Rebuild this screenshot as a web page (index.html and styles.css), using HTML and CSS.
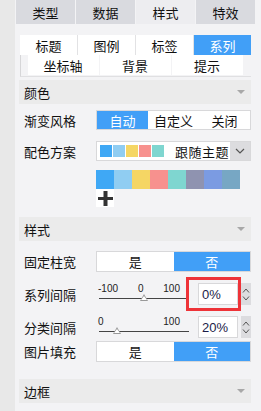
FILE: index.html
```html
<!DOCTYPE html>
<html lang="zh">
<head>
<meta charset="utf-8">
<link rel="stylesheet" href="styles.css">
</head>
<body>
<div class="strip"></div>
<div class="main">
  <div class="top-tabs">
    <div class="top-tab">类型</div>
    <div class="top-tab">数据</div>
    <div class="top-tab active">样式</div>
    <div class="top-tab">特效</div>
  </div>

  <div class="sub-tabs">
    <div class="sub-row1">
      <div class="sub-tab">标题</div>
      <div class="sub-tab">图例</div>
      <div class="sub-tab">标签</div>
      <div class="sub-tab active">系列</div>
    </div>
    <div class="sub-row2">
      <div class="sub-tab2">坐标轴</div>
      <div class="sub-tab2">背景</div>
      <div class="sub-tab2">提示</div>
    </div>
  </div>

  <div class="section-head first"><span>颜色</span><i class="tri"></i></div>

  <div class="row r-grad">
    <div class="label">渐变风格</div>
    <div class="btn-group">
      <div class="btn active">自动</div>
      <div class="btn">自定义</div>
      <div class="btn">关闭</div>
    </div>
  </div>

  <div class="row r-scheme">
    <div class="label">配色方案</div>
    <div class="select">
      <div class="select-body">
        <span class="sw" style="background:#3fa8f5"></span>
        <span class="sw" style="background:#90cdf2"></span>
        <span class="sw" style="background:#f5d664"></span>
        <span class="sw" style="background:#f7918e"></span>
        <span class="sw" style="background:#7fd6d0"></span>
        <span class="select-text">跟随主题</span>
      </div>
      <div class="select-arrow">
        <svg width="10" height="6" viewBox="0 0 10 6"><polyline points="1,1 5,5 9,1" fill="none" stroke="#555" stroke-width="1.2"/></svg>
      </div>
    </div>
  </div>

  <div class="palette-wrap">
    <div class="palette">
      <span style="background:#3fa8f5"></span>
      <span style="background:#90cdf2"></span>
      <span style="background:#f5d664"></span>
      <span style="background:#f7918e"></span>
      <span style="background:#7fd6d0"></span>
      <span style="background:#8f93b0"></span>
      <span style="background:#7b9be2"></span>
      <span style="background:#77a7c4"></span>
    </div>
    <div class="plus">
      <svg width="18" height="18" viewBox="0 0 18 18"><rect x="7.5" y="2" width="4" height="15" fill="#333"/><rect x="2" y="8" width="15" height="3" fill="#333"/></svg>
    </div>
  </div>

  <div class="section-head s-style"><span>样式</span><i class="tri"></i></div>

  <div class="row r-fixed">
    <div class="label">固定柱宽</div>
    <div class="toggle">
      <div class="tg">是</div>
      <div class="tg active">否</div>
    </div>
  </div>

  <div class="row r-slider1">
    <div class="label">系列间隔</div>
    <div class="slider-ctl">
      <div class="slider">
        <div class="ticks">
          <span>-100</span><span>0</span><span>100</span>
        </div>
        <div class="track"><i class="thumb" style="left:45px"></i></div>
      </div>
      <div class="num">
        <div class="input">0%</div>
        <div class="highlight"></div>
      </div>
      <div class="spin">
        <svg width="8" height="5" viewBox="0 0 8 5"><polyline points="1,4.5 4,1 7,4.5" fill="none" stroke="#555" stroke-width="1"/></svg>
        <svg width="8" height="5" viewBox="0 0 8 5"><polyline points="1,0.5 4,4 7,0.5" fill="none" stroke="#555" stroke-width="1"/></svg>
      </div>
    </div>
  </div>

  <div class="row r-slider2">
    <div class="label">分类间隔</div>
    <div class="slider-ctl">
      <div class="slider">
        <div class="ticks">
          <span>0</span><span>100</span>
        </div>
        <div class="track"><i class="thumb" style="left:18px"></i></div>
      </div>
      <div class="num">
        <div class="input">20%</div>
      </div>
      <div class="spin">
        <svg width="8" height="5" viewBox="0 0 8 5"><polyline points="1,4.5 4,1 7,4.5" fill="none" stroke="#555" stroke-width="1"/></svg>
        <svg width="8" height="5" viewBox="0 0 8 5"><polyline points="1,0.5 4,4 7,0.5" fill="none" stroke="#555" stroke-width="1"/></svg>
      </div>
    </div>
  </div>

  <div class="row r-fill">
    <div class="label">图片填充</div>
    <div class="toggle">
      <div class="tg">是</div>
      <div class="tg active">否</div>
    </div>
  </div>

  <div class="section-head s-border"><span>边框</span><i class="tri"></i></div>
</div>
</body>
</html>
```
FILE: styles.css
```css
* { box-sizing: border-box; }
html, body { margin: 0; padding: 0; }
body {
  width: 261px;
  height: 411px;
  overflow: hidden;
  display: flex;
  background: #f3f3f5;
  font-family: "Noto Sans CJK SC", "Noto Sans", sans-serif;
  font-size: 12px;
  color: #111;
}
.strip {
  width: 15px;
  flex: 0 0 15px;
  background: #e8e8e8;
}
.main {
  flex: 1;
  display: flex;
  flex-direction: column;
}

/* top tabs */
.top-tabs {
  display: flex;
  gap: 1px;
  height: 24px;
  margin: 0 6px 0 1px;
}
.top-tab {
  flex: 1;
  display: flex;
  align-items: center;
  justify-content: center;
  background: #d9dadf;
  font-size: 13px;
  line-height: 1;
}
.top-tab.active { background: #ededf0; }

/* sub tabs */
.sub-tabs {
  margin: 11px 10px 0 5px;
}
.sub-row1 {
  display: flex;
  gap: 1px;
  height: 20px;
  background: #e2e2e4;
}
.sub-tab {
  flex: 1;
  background: #fff;
  display: flex;
  align-items: center;
  justify-content: center;
  font-size: 13px;
  line-height: 1;
}
.sub-tab.active { background: #419ff7; color: #fff; }
.sub-row2 {
  display: flex;
  justify-content: center;
  gap: 1px;
  height: 22px;
  border-left: 1px solid #d6d6d8;
  border-bottom: 1px solid #e0e0e2;
  padding-right: 2px;
}
.sub-tab2 {
  width: 71px;
  height: 20px;
  background: #fff;
  display: flex;
  align-items: center;
  justify-content: center;
  font-size: 13px;
  line-height: 1;
}

/* section headers */
.section-head {
  margin: 0 10px 0 4px;
  height: 24px;
  background: #ebebeb;
  display: flex;
  align-items: center;
  padding: 0 6px 0 5px;
  font-size: 13px;
  line-height: 1;
}
.section-head.first { margin-top: 3px; }
.section-head.s-style { margin-top: 10px; }
.section-head.s-border { margin-top: 17px; }
.tri {
  margin-left: auto;
  width: 0;
  height: 0;
  border-left: 4px solid transparent;
  border-right: 4px solid transparent;
  border-top: 4px solid #a8a8a8;
}

/* rows */
.row {
  display: grid;
  grid-template-columns: 72px 155px;
  margin-left: 9px;
  align-items: center;
}
.label { font-size: 13px; line-height: 1; }
.r-grad { margin-top: 6px; height: 20px; }
.r-scheme { margin-top: 11px; height: 20px; }
.r-fixed { margin-top: 10px; height: 21px; }
.r-slider1 { margin-top: 11px; height: 22px; }
.r-slider2 { margin-top: 11px; height: 22px; }
.r-fill { margin-top: 3px; height: 21px; }

.btn-group {
  display: flex;
  height: 20px;
  border: 1px solid #d8d8da;
  background: #fff;
}
.btn {
  flex: 1;
  display: flex;
  align-items: center;
  justify-content: center;
  font-size: 13px;
  line-height: 1;
}
.btn.active { background: #419ff7; color: #fff; }

.select {
  display: flex;
  height: 20px;
  border: 1px solid #d8d8da;
  background: #fff;
}
.select-body {
  flex: 1;
  display: flex;
  align-items: center;
  padding-left: 3px;
  gap: 1px;
}
.sw { width: 12px; height: 12px; display: block; }
.select-text {
  margin-left: 10px;
  font-size: 13px;
  line-height: 1;
  letter-spacing: 0.5px;
}
.select-arrow {
  width: 20px;
  background: #dcdcdf;
  display: flex;
  align-items: center;
  justify-content: center;
}

.palette-wrap {
  margin: 9px 0 0 81px;
  display: flex;
  flex-direction: column;
}
.palette {
  display: flex;
  height: 19px;
}
.palette span { width: 18px; height: 19px; display: block; }
.plus {
  width: 18px;
  height: 18px;
  background: #fff;
}
.plus svg { display: block; }

.toggle {
  display: flex;
  height: 21px;
  border: 1px solid #d8d8da;
  background: #fff;
}
.tg {
  flex: 1;
  display: flex;
  align-items: center;
  justify-content: center;
  font-size: 13px;
  line-height: 1;
}
.tg.active { background: #419ff7; color: #fff; }

/* sliders */
.slider-ctl {
  display: flex;
  height: 22px;
  align-items: stretch;
}
.slider {
  width: 90px;
  margin-right: 12px;
  padding-left: 2px;
  display: flex;
  flex-direction: column;
}
.ticks {
  display: flex;
  justify-content: space-between;
  width: 82px;
  font-family: "Liberation Sans", Arial, sans-serif;
  font-size: 10px;
  line-height: 10px;
  margin-top: 1px;
  color: #222;
}
.track {
  position: relative;
  margin: 4px 0 0 1px;
  width: 90px;
  height: 1px;
  background: #444;
}
.thumb {
  position: absolute;
  top: -4px;
  margin-left: -4px;
  width: 0;
  height: 0;
  border-left: 4px solid transparent;
  border-right: 4px solid transparent;
  border-bottom: 7px solid #999;
}
.thumb::after {
  content: "";
  position: absolute;
  left: -3px;
  top: 2px;
  border-left: 3px solid transparent;
  border-right: 3px solid transparent;
  border-bottom: 4px solid #fff;
}
.num {
  position: relative;
  width: 40px;
}
.input {
  height: 22px;
  background: #fff;
  border: 1px solid #d8d8da;
  display: flex;
  align-items: center;
  padding-left: 3px;
  font-family: "Liberation Sans", Arial, sans-serif;
  font-size: 13px;
  color: #1c1c48;
}
.highlight {
  position: absolute;
  left: -12px;
  top: -6px;
  width: 55px;
  height: 34px;
  border: 3px solid #ee3338;
}
.spin {
  margin-left: 3px;
  width: 10px;
  background: #dcdcdf;
  display: flex;
  flex-direction: column;
  align-items: center;
  justify-content: space-around;
  padding: 3px 0;
}
.spin svg { display: block; }
```
